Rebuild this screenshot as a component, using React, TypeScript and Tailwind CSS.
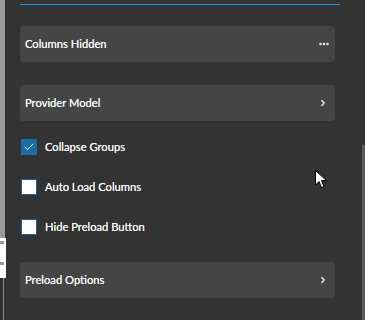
import { ChevronRight, Ellipsis, Check } from "lucide-react";

const font = { fontFamily: "Lato, 'Noto Sans', sans-serif" };

export default function App() {
  return (
    <div className="relative flex h-[320px] w-[365px] overflow-hidden bg-[#333333] text-[11.2px] text-[#f4f4f4]" style={font}>
      {/* left edge of the window behind */}
      <div className="flex w-[6px] shrink-0 flex-col">
        <div className="h-[238px] w-[5px] bg-[#9a9a9a]" />
        <div className="flex h-[40px] w-[6px] flex-col bg-white">
          <div className="mt-[3px] h-[3px] w-[4px] bg-[#9a9a9a]" />
          <div className="mt-[18px] h-[3px] w-[4px] bg-[#9a9a9a]" />
        </div>
        <div className="ml-[3px] flex-1 border-l border-[#8a8a8a]" />
      </div>

      <div className="flex w-[334px] flex-col pl-[14px]">
        <div className="mt-[4px] h-[1px] w-[320px] bg-[#1a9be6]" />

        <Card label="Columns Hidden" className="mt-[21px] pr-[5px]" icon={<Ellipsis size={12} strokeWidth={3} />} />
        <Card label="Provider Model" className="mt-[23px] pr-[7px]" icon={<ChevronRight size={10} strokeWidth={3} />} />

        <div className="mt-[6px] flex flex-col">
          <CheckRow label="Collapse Groups" checked />
          <CheckRow label="Auto Load Columns" />
          <CheckRow label="Hide Preload Button" />
        </div>

        <Card label="Preload Options" className="mt-[15px] pr-[7px]" icon={<ChevronRight size={10} strokeWidth={3} />} />
      </div>

      {/* scrollbar thumb */}
      <div className="absolute right-0 top-[145px] h-[175px] w-[3px] bg-[#5a5a5a]" />

      {/* mouse pointer */}
      <svg className="absolute left-[315px] top-[170px]" width="13" height="19" viewBox="0 0 13 19">
        <path d="M0.5 0.5 L0.5 15 L4 11.5 L6.5 17.5 L9 16.5 L6.5 10.5 L11.5 10.5 Z" fill="#fff" stroke="#000" strokeWidth="1" />
      </svg>
    </div>
  );
}

function Card({ label, icon, className = "" }: { label: string; icon: React.ReactNode; className?: string }) {
  return (
    <div className={`flex h-[36px] w-[315px] items-center justify-between rounded-[3px] bg-[#454545] pl-[5px] ${className}`}>
      <span className="[text-shadow:0_0_0.5px_#fff]">{label}</span>
      <span className="text-[#f5f5f5]">{icon}</span>
    </div>
  );
}

function CheckRow({ label, checked }: { label: string; checked?: boolean }) {
  return (
    <div className="flex h-[40px] items-center gap-[8px] pl-[1px]">
      {checked ? (
        <div className="flex h-[16px] w-[16px] items-center justify-center bg-[#1b6da6]">
          <Check size={12} strokeWidth={2} className="text-white" />
        </div>
      ) : (
        <div className="h-[16px] w-[16px] border border-[#1f5f8f] bg-white" />
      )}
      <span className="[text-shadow:0_0_0.5px_#fff]">{label}</span>
    </div>
  );
}
